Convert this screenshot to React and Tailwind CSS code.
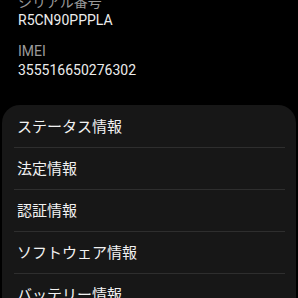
export default function App() {
  const items = ['ステータス情報', '法定情報', '認証情報', 'ソフトウェア情報', 'バッテリー情報']

  return (
    <div
      className="w-[298px] h-[298px] overflow-hidden bg-black"
      style={{ fontFamily: 'Roboto, "Noto Sans CJK JP", sans-serif' }}
    >
      {/* Device info */}
      <div className="pl-[18px] mt-[-7px]">
        <div className="h-[18px] leading-[18px] text-[14px] text-[#9a9a9a]">シリアル番号</div>
        <div className="h-[18px] leading-[18px] text-[14px] text-[#ececec]">R5CN90PPPLA</div>
        <div className="h-[18px] leading-[18px] text-[14px] text-[#9a9a9a] mt-[13px]">IMEI</div>
        <div className="h-[18px] leading-[18px] text-[14px] text-[#ececec] mt-px">355516650276302</div>
      </div>

      {/* Menu card */}
      <div className="mx-[2px] mt-[26px] pt-px rounded-[18px] bg-[#171717]">
        {items.map((label, i) => (
          <div key={label}>
            {i > 0 && <div className="h-px ml-[12px] mr-[11px] bg-[#2e2e2e]" />}
            <div className="h-[41px] flex items-center px-[15px] text-[15px] leading-[20px] text-[#f2f2f2]">
              {label}
            </div>
          </div>
        ))}
      </div>
    </div>
  )
}
